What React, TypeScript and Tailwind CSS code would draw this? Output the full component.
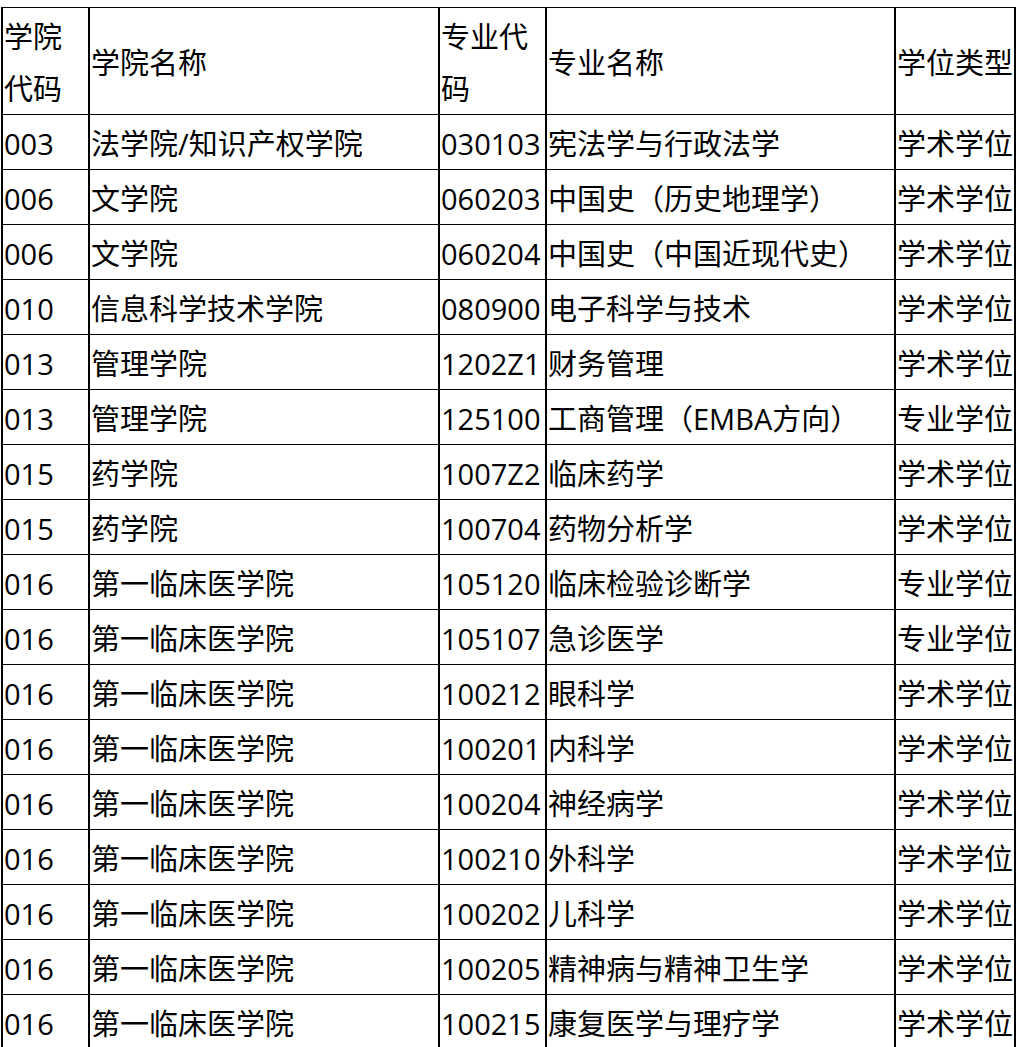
import React from "react";

const rows: [string, string, string, string, string][] = [
  ["003", "法学院/知识产权学院", "030103", "宪法学与行政法学", "学术学位"],
  ["006", "文学院", "060203", "中国史（历史地理学）", "学术学位"],
  ["006", "文学院", "060204", "中国史（中国近现代史）", "学术学位"],
  ["010", "信息科学技术学院", "080900", "电子科学与技术", "学术学位"],
  ["013", "管理学院", "1202Z1", "财务管理", "学术学位"],
  ["013", "管理学院", "125100", "工商管理（EMBA方向）", "专业学位"],
  ["015", "药学院", "1007Z2", "临床药学", "学术学位"],
  ["015", "药学院", "100704", "药物分析学", "学术学位"],
  ["016", "第一临床医学院", "105120", "临床检验诊断学", "专业学位"],
  ["016", "第一临床医学院", "105107", "急诊医学", "专业学位"],
  ["016", "第一临床医学院", "100212", "眼科学", "学术学位"],
  ["016", "第一临床医学院", "100201", "内科学", "学术学位"],
  ["016", "第一临床医学院", "100204", "神经病学", "学术学位"],
  ["016", "第一临床医学院", "100210", "外科学", "学术学位"],
  ["016", "第一临床医学院", "100202", "儿科学", "学术学位"],
  ["016", "第一临床医学院", "100205", "精神病与精神卫生学", "学术学位"],
  ["016", "第一临床医学院", "100215", "康复医学与理疗学", "学术学位"],
];

const cellBase =
  "flex items-center border-b border-black pl-[1px] pt-[3px] leading-[52px]";

function Row({ cells, header }: { cells: string[]; header?: boolean }) {
  const h = header ? "h-[107px]" : "h-[55px]";
  return (
    <>
      {cells.map((c, i) => (
        <div
          key={i}
          className={`${cellBase} ${h} ${
            i < 4 ? "border-r-2" : "whitespace-nowrap"
          } ${i === 3 || i === 1 ? "whitespace-nowrap" : ""}`}
        >
          <span className="block">{c}</span>
        </div>
      ))}
    </>
  );
}

export default function App() {
  return (
    <div
      className="bg-white w-[1017px] h-[1047px] overflow-hidden pt-[7px] pl-[1px] text-black text-[29px]"
      style={{ fontFamily: '"Open Sans", "Noto Sans CJK SC", sans-serif' }}
    >
      <div className="w-[1015px] border-t border-l-2 border-r-2 border-black grid grid-cols-[87px_350px_107px_349px_118px]">
        <Row header cells={["学院代码", "学院名称", "专业代码", "专业名称", "学位类型"]} />
        {rows.map((r, i) => (
          <Row key={i} cells={r} />
        ))}
      </div>
    </div>
  );
}
